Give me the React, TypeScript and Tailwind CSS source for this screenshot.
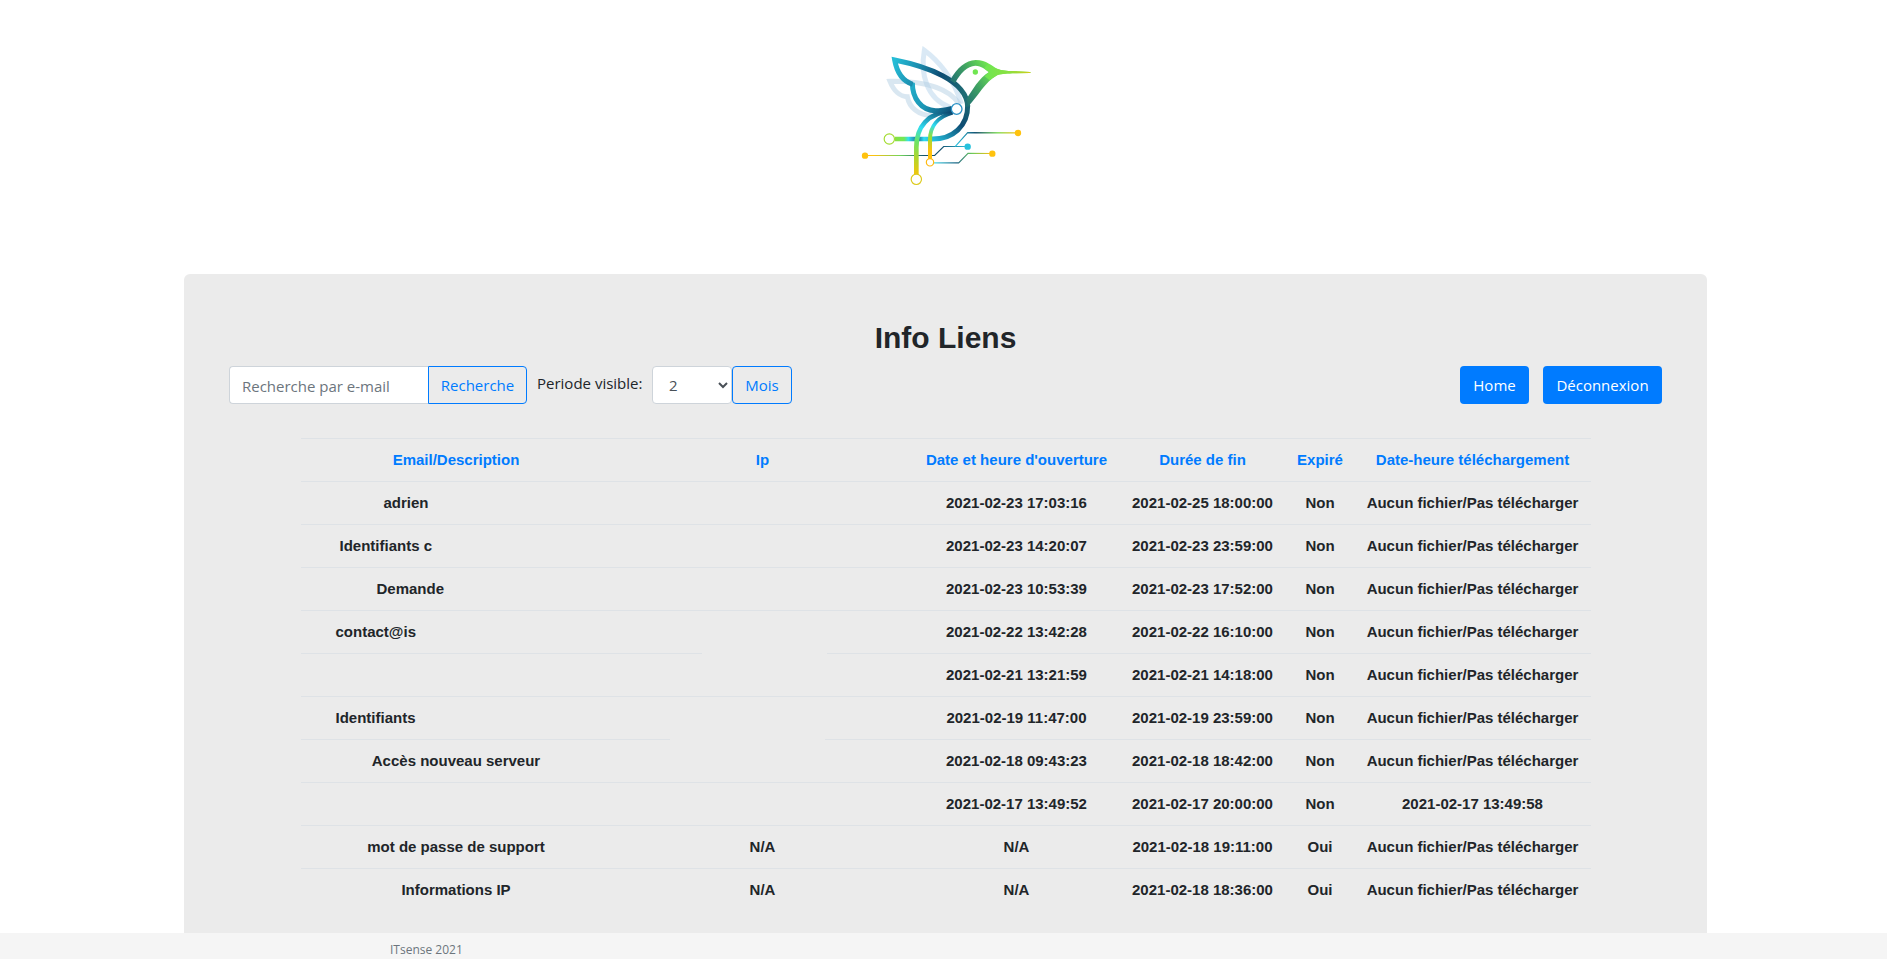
const CELL = "relative h-[43px] border-t border-[#dee2e6] p-0 text-center font-bold leading-[18px]";

type Row = {
  email: string;
  emailClass?: string;
  ip?: string;
  patch?: string;
  opened: string;
  end: string;
  expired: string;
  download: string;
};

const NONE = "Aucun fichier/Pas télécharger";

const rows: Row[] = [
  { email: "adrien", emailClass: "ml-[83px]", opened: "2021-02-23 17:03:16", end: "2021-02-25 18:00:00", expired: "Non", download: NONE },
  { email: "Identifiants c", emailClass: "ml-[39px]", opened: "2021-02-23 14:20:07", end: "2021-02-23 23:59:00", expired: "Non", download: NONE },
  { email: "Demande", emailClass: "ml-[76px]", opened: "2021-02-23 10:53:39", end: "2021-02-23 17:52:00", expired: "Non", download: NONE },
  { email: "contact@is", emailClass: "ml-[35px]", opened: "2021-02-22 13:42:28", end: "2021-02-22 16:10:00", expired: "Non", download: NONE },
  { email: "", patch: "left-[90px] w-[125px]", opened: "2021-02-21 13:21:59", end: "2021-02-21 14:18:00", expired: "Non", download: NONE },
  { email: "Identifiants", emailClass: "ml-[35px]", opened: "2021-02-19 11:47:00", end: "2021-02-19 23:59:00", expired: "Non", download: NONE },
  { email: "Accès nouveau serveur", patch: "left-[58px] w-[155px]", opened: "2021-02-18 09:43:23", end: "2021-02-18 18:42:00", expired: "Non", download: NONE },
  { email: "", opened: "2021-02-17 13:49:52", end: "2021-02-17 20:00:00", expired: "Non", download: "2021-02-17 13:49:58" },
  { email: "mot de passe de support", ip: "N/A", opened: "N/A", end: "2021-02-18 19:11:00", expired: "Oui", download: NONE },
  { email: "Informations IP", ip: "N/A", opened: "N/A", end: "2021-02-18 18:36:00", expired: "Oui", download: NONE },
];

const columns = [
  { label: "Email/Description", width: "w-[311px]" },
  { label: "Ip", width: "w-[302px]" },
  { label: "Date et heure d'ouverture", width: "w-[206px]" },
  { label: "Durée de fin", width: "w-[166px]" },
  { label: "Expiré", width: "w-[69px]" },
  { label: "Date-heure téléchargement", width: "w-[236px]" },
];

function Logo() {
  return (
    <svg viewBox="0 0 570 510" className="h-[170px] w-[190px]" fill="none" role="img" aria-label="ITsense">
      <defs>
        <linearGradient id="wing" gradientUnits="userSpaceOnUse" x1="128" y1="110" x2="345" y2="190">
          <stop offset="0" stopColor="#25bcd6" />
          <stop offset="0.3" stopColor="#1c8fb0" />
          <stop offset="0.62" stopColor="#0d4c73" />
          <stop offset="1" stopColor="#1f6d74" />
        </linearGradient>
        <linearGradient id="wingLow" gradientUnits="userSpaceOnUse" x1="150" y1="130" x2="310" y2="240">
          <stop offset="0" stopColor="#25bcd6" />
          <stop offset="0.6" stopColor="#1c96b5" />
          <stop offset="1" stopColor="#0d4c73" />
        </linearGradient>
        <linearGradient id="body" gradientUnits="userSpaceOnUse" x1="355" y1="200" x2="240" y2="328">
          <stop offset="0" stopColor="#1f6d74" />
          <stop offset="0.45" stopColor="#0d4c73" />
          <stop offset="1" stopColor="#27c4e2" />
        </linearGradient>
        <linearGradient id="foot" gradientUnits="userSpaceOnUse" x1="133" y1="0" x2="250" y2="0">
          <stop offset="0" stopColor="#8be03f" />
          <stop offset="0.25" stopColor="#6fe85a" />
          <stop offset="0.36" stopColor="#35dff0" />
          <stop offset="0.6" stopColor="#176a92" />
          <stop offset="0.76" stopColor="#2fdcf2" />
          <stop offset="1" stopColor="#27aecb" />
        </linearGradient>
        <linearGradient id="head" gradientUnits="userSpaceOnUse" x1="315" y1="180" x2="420" y2="110">
          <stop offset="0" stopColor="#1f6d74" />
          <stop offset="0.5" stopColor="#3fa262" />
          <stop offset="1" stopColor="#70e651" />
        </linearGradient>
        <linearGradient id="beak" gradientUnits="userSpaceOnUse" x1="410" y1="0" x2="543" y2="0">
          <stop offset="0" stopColor="#70e651" />
          <stop offset="0.5" stopColor="#8be03f" />
          <stop offset="1" stopColor="#d5cb16" />
        </linearGradient>
        <linearGradient id="tail" gradientUnits="userSpaceOnUse" x1="280" y1="240" x2="200" y2="432">
          <stop offset="0" stopColor="#0d4c73" />
          <stop offset="0.36" stopColor="#2fdcf2" />
          <stop offset="0.55" stopColor="#66e56c" />
          <stop offset="0.8" stopColor="#b4d52a" />
          <stop offset="1" stopColor="#f0c60c" />
        </linearGradient>
        <linearGradient id="tail2" gradientUnits="userSpaceOnUse" x1="300" y1="250" x2="240" y2="385">
          <stop offset="0" stopColor="#0d4c73" />
          <stop offset="0.36" stopColor="#2fdcf2" />
          <stop offset="0.58" stopColor="#8be03f" />
          <stop offset="0.85" stopColor="#ffc20e" />
        </linearGradient>
        <linearGradient id="wireA" gradientUnits="userSpaceOnUse" x1="45" y1="0" x2="350" y2="0">
          <stop offset="0.08" stopColor="#ffc20e" />
          <stop offset="0.35" stopColor="#6fd35a" />
          <stop offset="0.58" stopColor="#14516f" />
          <stop offset="0.75" stopColor="#14516f" />
          <stop offset="1" stopColor="#2fc0dc" />
        </linearGradient>
        <linearGradient id="wireB" gradientUnits="userSpaceOnUse" x1="316" y1="0" x2="504" y2="0">
          <stop offset="0" stopColor="#2fc7e4" />
          <stop offset="0.33" stopColor="#14516f" />
          <stop offset="0.68" stopColor="#78d94e" />
          <stop offset="1" stopColor="#ffc20e" />
        </linearGradient>
        <linearGradient id="wireC" gradientUnits="userSpaceOnUse" x1="250" y1="0" x2="427" y2="0">
          <stop offset="0" stopColor="#4fe0f0" />
          <stop offset="0.4" stopColor="#1e6484" />
          <stop offset="0.65" stopColor="#6ac95a" />
          <stop offset="1" stopColor="#ffc20e" />
        </linearGradient>
      </defs>

      <g strokeWidth="15" strokeOpacity="0.5" strokeLinejoin="miter" strokeMiterlimit="6">
        <path d="M300 232C228 206 211 130 223 61C262 90 312 144 334 222" stroke="#b5d4ec" />
        <path d="M246 256C205 257 178 232 172 200C150 200 131 182 120 154C202 153 290 166 328 222" stroke="#b3d0e4" />
      </g>

      <g strokeWidth="3.400">
        <path d="M45 376.500H254L281 349.500H350" stroke="url(#wireA)" />
        <path d="M316 349L353 308L504 308.500" stroke="url(#wireB)" />
        <path d="M250 398.500H326L354 370L427 370.500" stroke="url(#wireC)" />
      </g>

      <path d="M135 327H242" stroke="url(#foot)" strokeWidth="14" />
      <path d="M240 327C310 330 354 286 353 226" stroke="url(#body)" strokeWidth="15" />
      <path d="M308 248C264 260 240 289 240 329V386" stroke="url(#tail2)" strokeWidth="12" />
      <path d="M306 242C232 248 199 292 199 352V434" stroke="url(#tail)" strokeWidth="14" />
      <path d="M187 158C187 204 213 242 257 242C276 242 288 239 306 235" stroke="url(#wingLow)" strokeWidth="15" />
      <path d="M353 230C351 149 224 108 134 90C141 130 158 153 188 163" stroke="url(#wing)" strokeWidth="15" />

      <path
        d="M300 151C322 112 347 91 377 90C411 90 424 108 443 117C455 122 471 123 487 123L540 126Q544 127.500 540 129L487 130C466 131 449 132 439 137C407 154 384 198 355 229L349 207C366 183 387 143 417 126C404 119 396 107 376 107C352 108 332 128 315 160Z"
        fill="url(#head)"
      />
      <path
        d="M412 104C425 108 432 114 443 117C455 122 471 123 487 123L540 126Q544 127.500 540 129L487 130C466 131 449 132 439 137L419 151L404 139L417 126L402 115Z"
        fill="url(#beak)"
      />
      <circle cx="376" cy="126" r="8" fill="#70e651" />

      <circle cx="320" cy="237" r="16" fill="#fff" stroke="#2b92c6" strokeWidth="4" />
      <circle cx="118" cy="327" r="15.500" fill="#fff" stroke="#a4dc32" strokeWidth="3.500" />
      <circle cx="199" cy="448" r="15.500" fill="#fff" stroke="#dcca1c" strokeWidth="3.500" />
      <circle cx="240" cy="397" r="11" fill="#fff" stroke="#ffb90e" strokeWidth="3.500" />
      <g fill="#ffc20e">
        <circle cx="45" cy="377" r="9.500" />
        <circle cx="504" cy="309" r="9.500" />
        <circle cx="427" cy="371" r="9.500" />
      </g>
      <circle cx="353" cy="350" r="9.500" fill="#27c2dd" />
    </svg>
  );
}

export default function App() {
  return (
    <div className="flex min-h-screen flex-col bg-white font-['Open_Sans','Noto_Sans',sans-serif] text-[15px] text-[#212529]">
      <main className="flex grow flex-col pl-[184px] pr-[180px]">
        <header className="flex justify-center pb-[74px] pr-[2px] pt-[30px]">
          <Logo />
        </header>

        <section className="grow rounded-t-md bg-[#ebebeb] px-[45px] pb-[22px] pt-[46px]">
          <h1 className="mb-[10px] text-center font-['Liberation_Sans',Arial,sans-serif] text-[30px] font-bold leading-[36px]">
            Info Liens
          </h1>

          <div className="flex justify-between">
            <div className="flex">
              <form className="flex" onSubmit={(e) => e.preventDefault()}>
                <input
                  type="text"
                  aria-label="Recherche par e-mail"
                  placeholder="Recherche par e-mail"
                  className="h-[38px] w-[199px] rounded-l border border-r-0 border-[#ced4da] bg-white px-3 pt-px placeholder:text-[#6c757d] placeholder:opacity-100"
                />
                <button type="submit" className="h-[38px] w-[99px] rounded-r border border-[#007bff] text-[#007bff]">
                  Recherche
                </button>
              </form>
              <form className="ml-[10px] flex" onSubmit={(e) => e.preventDefault()}>
                <label htmlFor="periode" className="w-[115px] whitespace-nowrap pt-1 leading-[26px]">
                  Periode visible:
                </label>
                <select
                  id="periode"
                  defaultValue="2"
                  className="h-[38px] w-[80px] rounded border border-[#ced4da] bg-white pl-3 text-[#495057]"
                >
                  <option>1</option>
                  <option>2</option>
                  <option>3</option>
                </select>
                <button type="submit" className="h-[38px] w-[60px] rounded border border-[#007bff] text-[#007bff]">
                  Mois
                </button>
              </form>
            </div>
            <nav className="flex gap-[14px] text-white">
              <a href="#home" className="flex h-[38px] w-[69px] items-center justify-center rounded bg-[#007bff]">
                Home
              </a>
              <a href="#logout" className="flex h-[38px] w-[119px] items-center justify-center rounded bg-[#007bff]">
                Déconnexion
              </a>
            </nav>
          </div>

          <table className="mx-auto mt-[34px] w-[90%] table-fixed border-separate border-spacing-0 font-['Liberation_Sans',Arial,sans-serif]">
            <thead>
              <tr>
                {columns.map((c) => (
                  <th key={c.label} scope="col" className={`${CELL} ${c.width} whitespace-nowrap text-[#007bff]`}>
                    {c.label}
                  </th>
                ))}
              </tr>
            </thead>
            <tbody>
              {rows.map((r) => (
                <tr key={r.end}>
                  <td className={CELL}>
                    {r.emailClass ? (
                      <span className={`block whitespace-nowrap text-left ${r.emailClass}`}>{r.email}</span>
                    ) : (
                      r.email
                    )}
                  </td>
                  <td className={CELL}>
                    {r.patch && <span className={`absolute -top-px h-px bg-[#ebebeb] ${r.patch}`} />}
                    {r.ip}
                  </td>
                  <td className={CELL}>{r.opened}</td>
                  <td className={CELL}>{r.end}</td>
                  <td className={CELL}>{r.expired}</td>
                  <td className={`${CELL} whitespace-nowrap`}>{r.download}</td>
                </tr>
              ))}
            </tbody>
          </table>
        </section>
      </main>

      <footer className="bg-[#f5f5f5] pl-[390px] pt-[7px] text-[12px] leading-[19px] text-[#6c757d]">ITsense 2021</footer>
    </div>
  );
}
